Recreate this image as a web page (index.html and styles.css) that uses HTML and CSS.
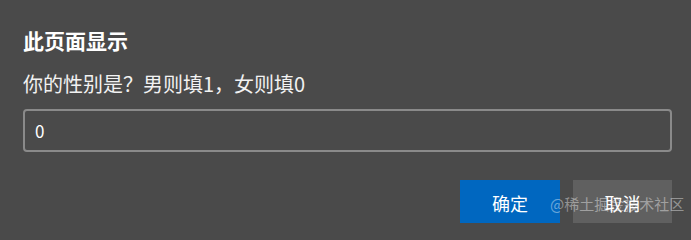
FILE: index.html
```html
<!DOCTYPE html>
<html lang="zh-CN">
<head>
<meta charset="utf-8">
<title>此页面显示</title>
<link rel="stylesheet" href="styles.css">
</head>
<body>
<div class="dialog">
  <div class="title">此页面显示</div>
  <div class="message">你的性别是？男则填1，女则填0</div>
  <div class="field"><input class="input" type="text" value="0"></div>
  <div class="actions">
    <button class="btn btn-primary">确定</button>
    <button class="btn btn-secondary">取消</button>
  </div>
  <div class="watermark">@稀土掘金技术社区</div>
</div>
</body>
</html>
```
FILE: styles.css
```css
html, body {
  margin: 0;
  padding: 0;
  background: #4a4a4a;
  height: 223px;
  overflow: hidden;
}
.dialog {
  position: relative;
  height: 223px;
  overflow: hidden;
  box-sizing: border-box;
  padding: 26px 19px 0 23px;
  font-family: "Noto Sans CJK SC", "Microsoft YaHei", sans-serif;
  color: #ffffff;
}
.title {
  font-size: 21px;
  font-weight: 700;
  line-height: 28px;
  height: 28px;
}
.message {
  margin-top: 16px;
  font-size: 20px;
  line-height: 28px;
  height: 28px;
  color: #f2f2f2;
}
.field {
  margin-top: 11px;
}
.input {
  box-sizing: border-box;
  display: block;
  width: 649px;
  height: 43px;
  margin: 0;
  padding: 0 10px;
  border: 2px solid #8a8a8a;
  border-radius: 4px;
  background: #4a4a4a;
  color: #ffffff;
  font-family: "Noto Sans CJK SC", sans-serif;
  font-size: 17px;
  outline: none;
}
.actions {
  margin-top: 28px;
  display: flex;
  justify-content: flex-end;
  gap: 13px;
}
.btn {
  box-sizing: border-box;
  height: 43px;
  border: none;
  margin: 0;
  padding: 3px 0 0 0;
  font-family: "Noto Sans CJK SC", sans-serif;
  font-size: 18px;
  line-height: 40px;
  color: #ffffff;
}
.btn-primary {
  width: 100px;
  background: #0067c0;
}
.btn-secondary {
  width: 99px;
  background: #606060;
}
.watermark {
  position: absolute;
  left: 550px;
  top: 192px;
  font-size: 15px;
  line-height: 24px;
  color: rgba(255, 255, 255, 0.42);
  white-space: nowrap;
  pointer-events: none;
}
```
